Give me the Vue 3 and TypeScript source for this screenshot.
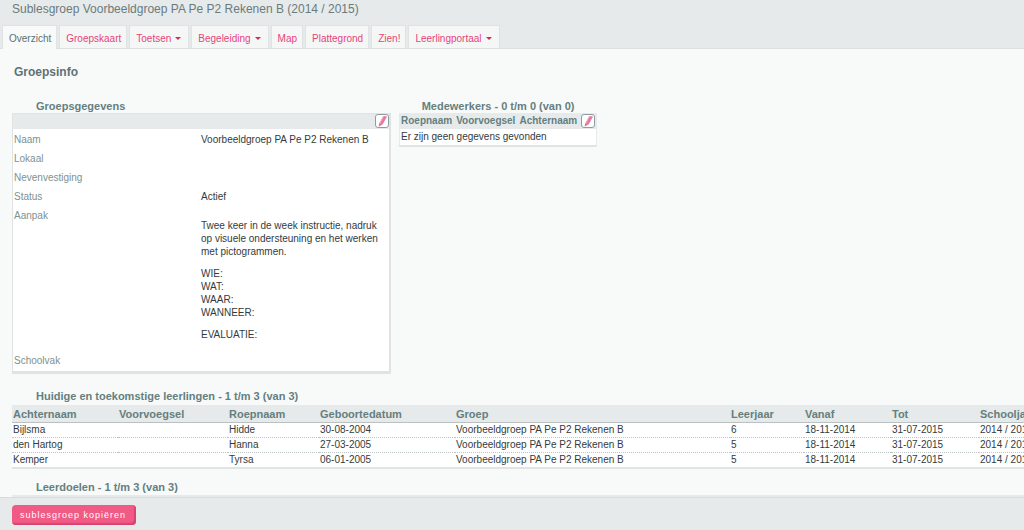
<script setup lang="ts">
interface Tab {
  label: string
  menu?: boolean
  active?: boolean
}

interface Pupil {
  lastName: string
  prefix: string
  firstName: string
  birthDate: string
  group: string
  grade: number
  from: string
  to: string
  schoolYear: string
}

const groupName = 'Voorbeeldgroep PA Pe P2 Rekenen B'

const tabs: Tab[] = [
  { label: 'Overzicht', active: true },
  { label: 'Groepskaart' },
  { label: 'Toetsen', menu: true },
  { label: 'Begeleiding', menu: true },
  { label: 'Map' },
  { label: 'Plattegrond' },
  { label: 'Zien!' },
  { label: 'Leerlingportaal', menu: true },
]

const columns: string[] = [
  'Achternaam', 'Voorvoegsel', 'Roepnaam', 'Geboortedatum', 'Groep',
  'Leerjaar', 'Vanaf', 'Tot', 'Schooljaar',
]

const period = { group: groupName, from: '18-11-2014', to: '31-07-2015', schoolYear: '2014 / 2015' }

const pupils: Pupil[] = [
  { lastName: 'Bijlsma', prefix: '', firstName: 'Hidde', birthDate: '30-08-2004', grade: 6, ...period },
  { lastName: 'den Hartog', prefix: '', firstName: 'Hanna', birthDate: '27-03-2005', grade: 5, ...period },
  { lastName: 'Kemper', prefix: '', firstName: 'Tyrsa', birthDate: '06-01-2005', grade: 5, ...period },
]
</script>

<template>
  <div class="page">
    <header class="top">
      <h1 class="title">Sublesgroep {{ groupName }} (2014 / 2015)</h1>
      <nav class="tabs">
        <a v-for="tab in tabs" :key="tab.label" href="#" class="tab" :class="{ active: tab.active }">
          {{ tab.label }}<span v-if="tab.menu" class="caret"></span>
        </a>
      </nav>
    </header>

    <main class="content">
      <h2 class="heading">Groepsinfo</h2>

      <div class="panels">
        <section class="details">
          <h3 class="caption">Groepsgegevens</h3>
          <div class="box">
            <div class="bar">
              <button type="button" class="edit" aria-label="Groepsgegevens bewerken">
                <svg viewBox="0 0 12 12" width="12" height="12">
                  <path d="M7.4 1 11 1.4 6.6 9.6 3.2 8.6Z" fill="#e8769a" />
                  <path d="M7.4 1 8.4 1.1 4.2 8.9 3.2 8.6Z" fill="#f2a5bd" />
                  <path d="M3.2 8.6 6.6 9.6 2.6 11.4Z" fill="#d9708c" />
                </svg>
              </button>
            </div>
            <table class="fields">
              <tbody>
                <tr><th scope="row">Naam</th><td>{{ groupName }}</td></tr>
                <tr><th scope="row">Lokaal</th><td></td></tr>
                <tr><th scope="row">Nevenvestiging</th><td></td></tr>
                <tr><th scope="row">Status</th><td>Actief</td></tr>
                <tr>
                  <th scope="row">Aanpak</th>
                  <td class="approach">
                    <p>Twee keer in de week instructie, nadruk op visuele ondersteuning en het werken met pictogrammen.</p>
                    <p>WIE:<br>WAT:<br>WAAR:<br>WANNEER:</p>
                    <p>EVALUATIE:</p>
                  </td>
                </tr>
                <tr><th scope="row">Schoolvak</th><td></td></tr>
              </tbody>
            </table>
          </div>
        </section>

        <table class="staff">
          <caption>Medewerkers - 0 t/m 0 (van 0)</caption>
          <thead>
            <tr>
              <th scope="col">Roepnaam</th>
              <th scope="col">Voorvoegsel</th>
              <th scope="col">Achternaam</th>
              <td>
                <button type="button" class="edit" aria-label="Medewerkers bewerken">
                  <svg viewBox="0 0 12 12" width="12" height="12">
                    <path d="M7.4 1 11 1.4 6.6 9.6 3.2 8.6Z" fill="#e8769a" />
                    <path d="M7.4 1 8.4 1.1 4.2 8.9 3.2 8.6Z" fill="#f2a5bd" />
                    <path d="M3.2 8.6 6.6 9.6 2.6 11.4Z" fill="#d9708c" />
                  </svg>
                </button>
              </td>
            </tr>
          </thead>
          <tbody>
            <tr><td colspan="4">Er zijn geen gegevens gevonden</td></tr>
          </tbody>
        </table>
      </div>

      <table class="pupils">
        <caption>Huidige en toekomstige leerlingen - 1 t/m 3 (van 3)</caption>
        <colgroup>
          <col class="c-last"><col class="c-prefix"><col class="c-first"><col class="c-birth">
          <col class="c-group"><col class="c-grade"><col class="c-from"><col class="c-to"><col>
        </colgroup>
        <thead>
          <tr><th v-for="name in columns" :key="name" scope="col">{{ name }}</th></tr>
        </thead>
        <tbody>
          <tr v-for="p in pupils" :key="p.lastName">
            <td>{{ p.lastName }}</td>
            <td>{{ p.prefix }}</td>
            <td>{{ p.firstName }}</td>
            <td>{{ p.birthDate }}</td>
            <td>{{ p.group }}</td>
            <td>{{ p.grade }}</td>
            <td>{{ p.from }}</td>
            <td>{{ p.to }}</td>
            <td>{{ p.schoolYear }}</td>
          </tr>
        </tbody>
      </table>

      <section class="goals">
        <h3 class="caption">Leerdoelen - 1 t/m 3 (van 3)</h3>
        <div class="bar"></div>
      </section>
    </main>

    <footer class="actions">
      <button type="button" class="copy">sublesgroep kopiëren</button>
    </footer>
  </div>
</template>

<style>
body {
  margin: 0;
}
</style>

<style scoped>
.page {
  display: flex;
  flex-direction: column;
  height: 100vh;
  overflow: hidden;
  background: #f8faf9;
  color: #333b3d;
  font: 10px/13px "Liberation Sans", Arial, sans-serif;
}

.top {
  flex: none;
  background: #e6eaeb;
  border-bottom: 1px solid #dcdfe0;
}

.title {
  margin: 0;
  padding: 1px 12px 9px;
  font-size: 12px;
  line-height: 16px;
  font-weight: normal;
  color: #6b7b7c;
}

.tabs {
  display: flex;
  gap: 4px;
  padding-left: 3px;
}

.tab {
  display: flex;
  align-items: center;
  box-sizing: border-box;
  height: 22px;
  padding: 2px 5px 0 6px;
  background: #f5f7f6;
  box-shadow: 0 0 1px 1px #e0e3e4;
  clip-path: inset(-2px -2px 0);
  color: #e6447a;
  text-decoration: none;
  white-space: nowrap;
}

.tab.active {
  height: 23px;
  margin-bottom: -1px;
  padding-bottom: 1px;
  background: #f8faf9;
  color: #5f6f70;
}

.caret {
  margin: 0 2px 0 4px;
  border: 3px solid transparent;
  border-top-color: #d42a5e;
  border-bottom: 0;
}

.content {
  flex: 1;
  min-height: 0;
  overflow: hidden;
  padding: 15px 0 0 12px;
}

.heading {
  margin: 0 0 19px 2px;
  font-size: 12px;
  line-height: 16px;
  color: #5f7274;
}

.panels {
  display: flex;
  align-items: flex-start;
  gap: 9px;
  margin-bottom: 15px;
}

.caption {
  margin: 0;
  padding-left: 24px;
  font-size: 11px;
  line-height: 14px;
  color: #657f7e;
}

.details {
  width: 378px;
}

.box {
  background: #fff;
  border: 1px solid #dfe3e4;
  border-bottom-width: 3px;
  box-shadow: 1px 0 #dfe3e4;
}

.bar {
  display: flex;
  justify-content: flex-end;
  height: 15px;
  background: #e6eaeb;
}

.goals .bar {
  margin-top: 1px;
}

.edit {
  display: block;
  box-sizing: border-box;
  width: 14px;
  height: 14px;
  padding: 0;
  border: 1px solid #8f9c9f;
  border-radius: 3px;
  background: #fff;
}

.edit svg {
  display: block;
}

.fields {
  width: 100%;
  margin: 1px 0;
  border-collapse: collapse;
  table-layout: fixed;
}

.fields th,
.fields td {
  box-sizing: border-box;
  padding: 3px 1px;
  vertical-align: top;
  text-align: left;
}

.fields th {
  width: 50%;
  font-weight: normal;
  color: #80918f;
}

.fields td {
  padding-left: 0;
}

.fields .approach {
  padding: 13px 4px 10px 0;
}

.approach p {
  margin: 0 0 9px;
}

.approach p:last-child {
  margin-bottom: 0;
}

.staff,
.pupils {
  border-collapse: collapse;
  border-bottom: 2px solid #e0e4e4;
  background: #fff;
}

.staff caption,
.pupils caption {
  font-size: 11px;
  line-height: 14px;
  font-weight: bold;
  color: #657f7e;
}

.staff thead,
.pupils thead {
  background: #e6eaeb;
}

.staff th,
.pupils th {
  text-align: left;
  color: #657f7e;
}

.staff {
  border-left: 1px solid #e6eaeb;
  border-right: 1px solid #e6eaeb;
}

.staff th,
.staff td {
  padding: 1px;
  line-height: 14px;
}

.staff th {
  padding-right: 3px;
}

.pupils {
  width: 100%;
  min-width: 1072px;
  margin-bottom: 11px;
  table-layout: fixed;
}

.pupils caption {
  padding: 0 0 2px 24px;
  text-align: left;
}

.pupils th {
  padding: 2px 1px 0;
  border-bottom: 1px solid #b9c1c3;
  font-size: 11px;
  line-height: 15px;
}

.pupils td {
  padding: 1px;
  border-bottom: 1px dotted #bcc4c5;
  line-height: 12px;
}

.pupils tr:last-child td {
  border-bottom: 2px solid #e0e4e4;
}

.c-last { width: 106px; }
.c-prefix { width: 110px; }
.c-first { width: 91px; }
.c-birth { width: 136px; }
.c-group { width: 275px; }
.c-grade { width: 74px; }
.c-from { width: 87px; }
.c-to { width: 88px; }

.actions {
  flex: none;
  padding: 7px 12px 5px;
  background: #e6eaeb;
  border-top: 1px solid #d8dcdd;
}

.copy {
  display: block;
  height: 20px;
  padding: 0 10px 0 8px;
  border: 0;
  border-radius: 4px;
  background: #f05a85;
  box-shadow: inset -2px -2px 1px #d8436f;
  color: #fff;
  font: 9px/18px "Liberation Sans", Arial, sans-serif;
  letter-spacing: 1px;
}
</style>
